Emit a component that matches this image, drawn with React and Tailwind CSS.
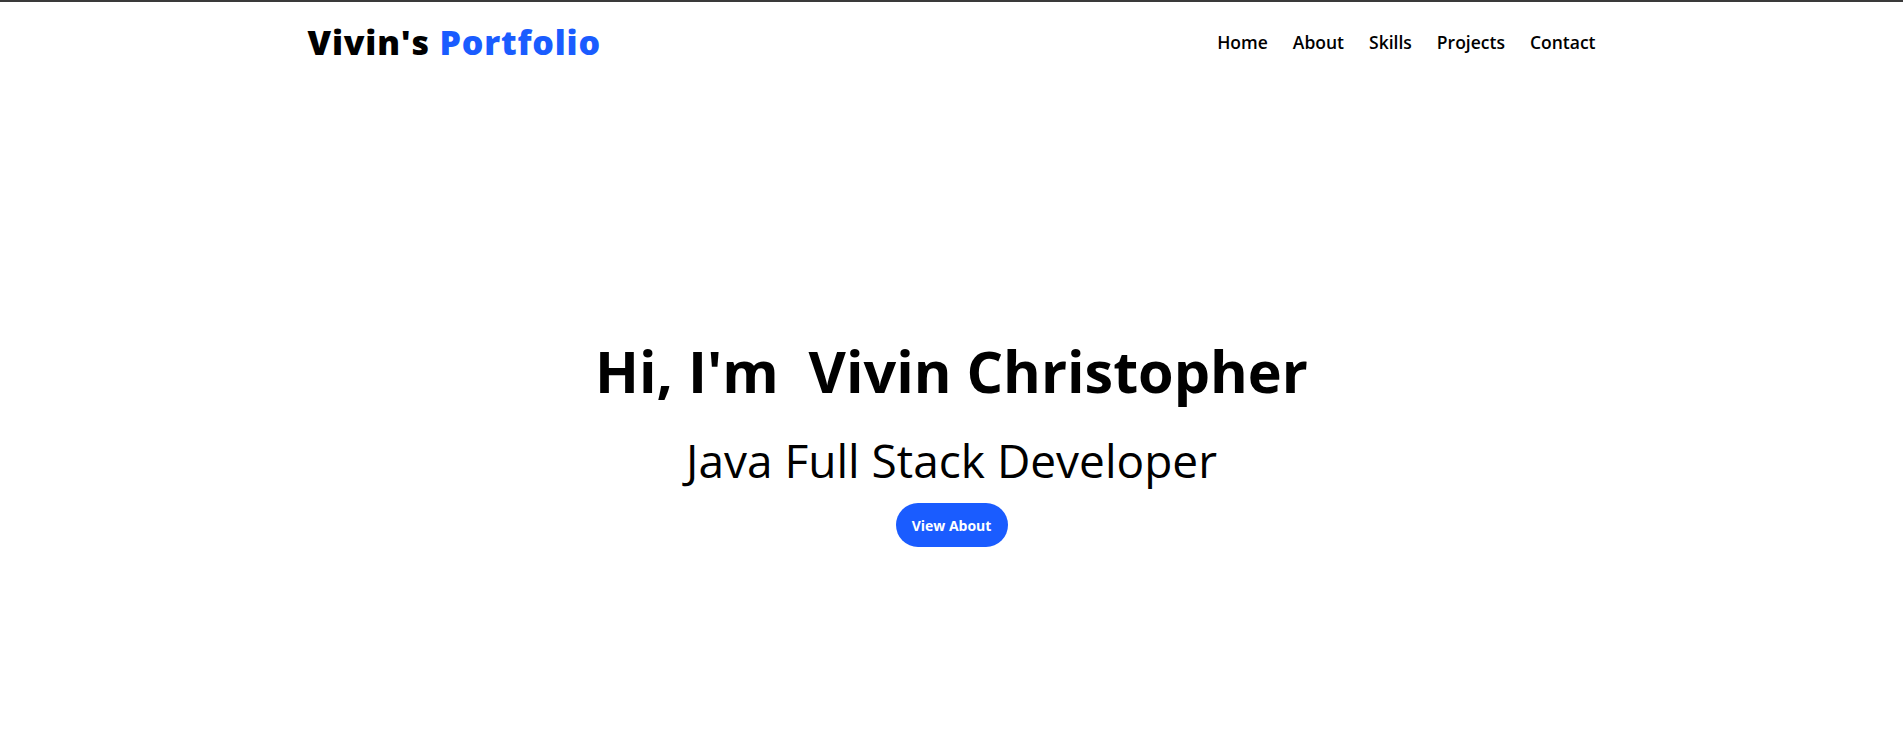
export default function App() {
  const links = ['Home', 'About', 'Skills', 'Projects', 'Contact']

  return (
    <div className="min-h-screen bg-white border-t-2 border-[#3a3a3a] font-['Open_Sans',sans-serif] text-black">
      <nav className="mx-auto w-[1288px] flex items-center justify-between pt-[16px]">
        <a href="#" className="text-[34px] font-extrabold leading-[48px] tracking-[0.8px]">
          Vivin's <span className="text-[#1a5cff]">Portfolio</span>
        </a>
        <ul className="flex items-center gap-[25px] text-[17.5px] font-semibold">
          {links.map(l => (
            <li key={l}><a href="#">{l}</a></li>
          ))}
        </ul>
      </nav>

      <section className="flex flex-col items-center pt-[273px]">
        <h1 className="text-[57.5px] font-bold leading-[64px]">Hi, I'm&nbsp; Vivin Christopher</h1>
        <h2 className="text-[46px] font-normal leading-[56px] mt-[29px]">Java Full Stack Developer</h2>
        <button className="mt-[15px] w-[112px] h-[44px] rounded-full bg-[#1a5cff] text-white text-[14px] font-bold">
          View About
        </button>
      </section>
    </div>
  )
}
